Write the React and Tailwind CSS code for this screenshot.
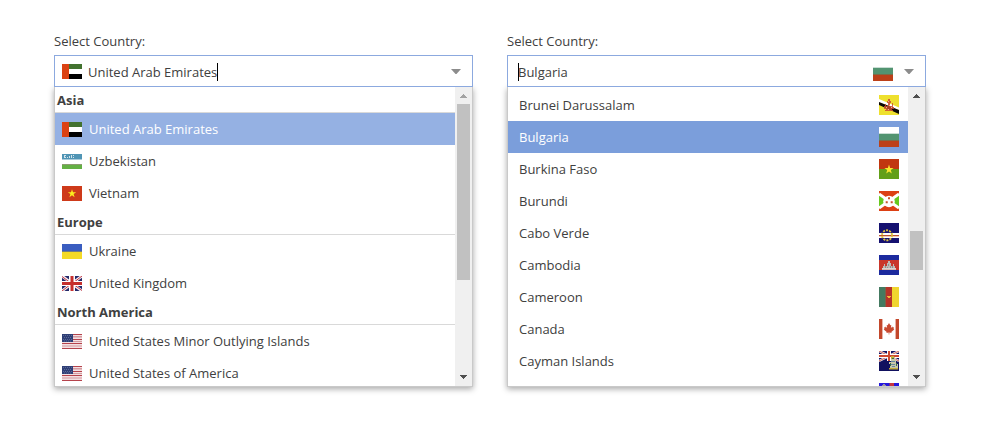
const FLAGS = {
  uae: (
    <>
      <path fill="#42722f" d="M7 0h13v5H7z" />
      <path fill="#fff" d="M7 5h13v5H7z" />
      <path fill="#000" d="M7 10h13v5H7z" />
      <path fill="#db4213" d="M0 0h7v15H0z" />
    </>
  ),
  uzbekistan: (
    <>
      <path fill="#fff" d="M0 0h20v15H0z" />
      <path fill="#5095b5" d="M0 0h20v5H0z" />
      <path fill="#a9cbdb" d="M0 5h20v1H0z" />
      <path fill="#64b044" d="M0 11h20v4H0z" />
      <path fill="#8c9b71" d="M0 10h20v1H0z" />
      <path fill="#fff" opacity=".75" d="M2 1h2v1H3v1h1v1H2zM5 3h1v1H5zM7 2h1v2H7zM9 1h1v3H9zM11 1h1v1h-1zM11 3h1v1h-1z" />
    </>
  ),
  vietnam: (
    <>
      <path fill="#ce3a1a" d="M0 0h20v15H0z" />
      <path fill="#fcee1f" d="M10 3.2l1 3h3.2l-2.6 1.9 1 3.1L10 9.3l-2.6 1.9 1-3.1-2.6-1.9H9z" />
    </>
  ),
  ukraine: (
    <>
      <path fill="#3a5dc0" d="M0 0h20v7H0z" />
      <path fill="#777f7c" d="M0 7h20v1H0z" />
      <path fill="#f4da27" d="M0 8h20v7H0z" />
    </>
  ),
  uk: (
    <>
      <path fill="#24296a" d="M0 0h20v15H0z" />
      <path stroke="#f4eef3" strokeWidth="2.8" d="M0 0l20 15M20 0L0 15" />
      <path stroke="#c33b45" strokeWidth="1" d="M0 .5l9 6.7M20 0l-9 7M0 15l9-7M20 14.5L11 8" />
      <path fill="#fff" d="M7 0h6v15H7zM0 5h20v5H0z" />
      <path fill="#c62f2d" d="M8.5 0h3v15h-3zM0 6h20v3H0z" />
    </>
  ),
  usa: (
    <>
      <path fill="#f3dfe1" d="M0 0h20v15H0z" />
      <path fill="#b5434c" d="M0 0h20v1H0zM0 5h20v1H0zM0 9h20v1H0zM0 14h20v1H0z" />
      <path fill="#d59aa0" d="M0 2h20v1.400H0zM0 7h20v1H0zM0 11.500h20v1H0z" />
      <path fill="#2f3f76" d="M0 0h11v8H0z" />
      <path stroke="#66749f" strokeWidth=".8" strokeDasharray="1 1" d="M1 1.500h9M2 3.500h8M1 5.500h9M2 7h8" />
    </>
  ),
  brunei: (
    <>
      <path fill="#eee02e" d="M0 0h20v20H0z" />
      <path fill="#fff" d="M0 4l20 8.500V15L0 7.500z" />
      <path fill="#0a0706" d="M0 7l20 8v4L0 10z" />
      <path fill="#ca4b30" d="M9 4h2v2h1v2h-1v3h2V8h1v4h1v2h-2v1h1v1H6v-1h1v-1H5v-3h1V9h1v2h2V8H8V6h1z" opacity=".85" />
      <path fill="#f0b48b" d="M9 6h1v1H9zM7 12h1v1H7zM12 12h1v1h-1zM10 10h1v1h-1zM9 14h1v1H9z" />
    </>
  ),
  bulgaria: (
    <>
      <path fill="#fff" d="M0 0h20v6H0z" />
      <path fill="#c9ddd4" d="M0 6h20v1H0z" />
      <path fill="#529471" d="M0 7h20v6H0z" />
      <path fill="#7c6c47" d="M0 13h20v1H0z" />
      <path fill="#bc4019" d="M0 14h20v6H0z" />
    </>
  ),
  burkina: (
    <>
      <path fill="#c13610" d="M0 0h20v10H0z" />
      <path fill="#629f18" d="M0 10h20v10H0z" />
      <path fill="#fae62f" d="M10 5.500l1.100 3.400h3.500l-2.800 2.100 1 3.400-2.800-2-2.800 2 1-3.400-2.800-2.100h3.500z" />
    </>
  ),
  burundi: (
    <>
      <path fill="#dc4014" d="M0 0h20v20H0z" />
      <path fill="#68c91e" d="M0 4l8 6-8 6zM20 4l-8 6 8 6z" />
      <path stroke="#fff" strokeWidth="3" d="M0 3l20 14M20 3L0 17" />
      <circle cx="10" cy="10.5" r="5.8" fill="#fff" />
      <path fill="#d94b25" d="M9 6.200h2v2H9zM6.700 10.300h2v2h-2zM11.700 10.300h2v2h-2z" />
      <path fill="#668d4c" d="M9.700 6.900h.7v.7h-.7zM7.400 11h.7v.7h-.7zM12.400 11h.7v.7h-.7z" />
    </>
  ),
  caboVerde: (
    <>
      <path fill="#151170" d="M0 0h20v20H0z" />
      <path fill="#fff" d="M0 10h20v5H0z" />
      <path fill="#be562c" d="M0 12h20v1.300H0z" />
      <circle cx="8" cy="12.3" r="5" fill="none" stroke="#ddc33d" strokeWidth="1.9" strokeDasharray="2 1.14" />
    </>
  ),
  cambodia: (
    <>
      <path fill="#1c2a9e" d="M0 0h20v20H0z" />
      <path fill="#c9362b" d="M0 5h20v10H0z" />
      <path fill="#bdb9b7" d="M3 14.500V13h1v-2h1V9h1v2h2V8h1V6h2v2h1v3h2V9h1v2h1v2h1v1.500z" />
      <path fill="#958d8c" d="M6 11h1v2H6zM9 9h1v2H9zM13 11h1v2h-1zM8 12h1v1H8zM11 11h1v2h-1z" />
      <path fill="#eee" d="M3 13.500h14v1H3z" />
    </>
  ),
  cameroon: (
    <>
      <path fill="#447a61" d="M0 0h7v20H0z" />
      <path fill="#b73329" d="M7 0h6v20H7z" />
      <path fill="#796349" d="M6 0h1v20H6z" />
      <path fill="#f0d52f" d="M13 0h7v20h-7z" />
      <path fill="#f1b93b" d="M8 9h4v1h-1v1H9v-1H8z" />
    </>
  ),
  canada: (
    <>
      <path fill="#fff" d="M0 0h20v20H0z" />
      <path fill="#c3472b" d="M0 0h3.400v20H0zM16.600 0H20v20h-3.400z" />
      <path fill="#c84a31" d="M10 4l1.300 2.300 1-.4-.4 3 1.500-1.400.4.900 1.200-.1-.4 1.600.7.500-3 2.500.3 1-2.300-.4v2h-.6v-2l-2.300.4.300-1-3-2.500.7-.5-.4-1.600 1.200.1.400-.9 1.500 1.400-.4-3 1 .4z" />
    </>
  ),
  cayman: (
    <>
      <path fill="#11115f" d="M0 0h20v20H0z" />
      <path stroke="#eee8ed" strokeWidth="2.4" d="M0 0l20 10M20 0L0 10" />
      <path stroke="#c85345" strokeWidth=".9" d="M0 0l20 10M20 0L0 10" />
      <path fill="#fff" d="M8 0h4v10H8zM0 3h20v4H0z" />
      <path fill="#ce4930" d="M9 0h2v10H9zM0 4h20v2H0z" />
      <path fill="#c9c7a8" d="M12 6h4v2h1v5h2v5h-8v-5h-1v-2h2z" />
      <path fill="#6787a0" d="M12 10h4v1h-4zM12 13h4v1h-4zM13 15h3v1h-3z" />
      <path fill="#c3ac3a" d="M12 5h3v3h-3zM10 17h9v1.500h-9z" />
      <path fill="#386b48" d="M13 7h2v1h-2zM11 12h1v3h-1zM17 12h1v3h-1z" />
    </>
  ),
  centralAfrica: (
    <>
      <path fill="#2417dd" d="M0 0h20v20H0z" />
      <path fill="#c6353f" d="M10.500 0H15v20h-4.500z" />
      <path fill="#9a91a8" d="M4 1h2v1h1v1H3V2h1z" />
    </>
  ),
};

const WIDE = ['uae', 'uzbekistan', 'vietnam', 'ukraine', 'uk', 'usa'];

const GROUPS = [
  { region: 'Asia', countries: [['United Arab Emirates', 'uae'], ['Uzbekistan', 'uzbekistan'], ['Vietnam', 'vietnam']] },
  { region: 'Europe', countries: [['Ukraine', 'ukraine'], ['United Kingdom', 'uk']] },
  { region: 'North America', countries: [['United States Minor Outlying Islands', 'usa'], ['United States of America', 'usa']] },
];

const COUNTRIES = [
  ['Brunei Darussalam', 'brunei'],
  ['Bulgaria', 'bulgaria'],
  ['Burkina Faso', 'burkina'],
  ['Burundi', 'burundi'],
  ['Cabo Verde', 'caboVerde'],
  ['Cambodia', 'cambodia'],
  ['Cameroon', 'cameroon'],
  ['Canada', 'canada'],
  ['Cayman Islands', 'cayman'],
  ['', 'centralAfrica'],
];

function Flag({ name }) {
  const wide = WIDE.includes(name);
  return (
    <svg
      className={wide ? 'mt-px h-[15px] w-5 shrink-0' : 'size-5 shrink-0'}
      viewBox={wide ? '0 0 20 15' : '0 0 20 20'}
      fill="none"
    >
      {FLAGS[name]}
    </svg>
  );
}

function Caret() {
  return (
    <svg className="mt-px h-[5px] w-[10px] shrink-0" viewBox="0 0 10 5">
      <path fill="#8c8c8c" d="M0 0h10L5.500 5h-1z" />
    </svg>
  );
}

function ScrollBar({ upClass, thumbClass }) {
  return (
    <div className="flex w-[17px] shrink-0 flex-col items-center bg-[#f0f0f0]">
      <div className="flex h-[17px] shrink-0 items-center pt-[1px]">
        <svg className={'h-1 w-[7px] ' + upClass} viewBox="0 0 7 4" shapeRendering="crispEdges">
          <path fill="currentColor" d="M3 0h1v1h1v1h1v1h1v1H0V3h1V2h1V1h1z" />
        </svg>
      </div>
      <div className={'w-[13px] shrink-0 bg-[#c1c1c1] ' + thumbClass} />
      <div className="mt-auto flex h-[17px] shrink-0 items-center pb-[1px]">
        <svg className="h-1 w-[7px] text-[#505050]" viewBox="0 0 7 4" shapeRendering="crispEdges">
          <path fill="currentColor" d="M0 0h7v1H6v1H5v1H4v1H3V3H2V2H1V1H0z" />
        </svg>
      </div>
    </div>
  );
}

function Picker({ field, children, scrollBar }) {
  return (
    <div className="w-[419px]">
      <div className="h-[23px]">Select Country:</div>
      <div className="relative z-10 flex h-8 items-center border border-[#8ca9df] bg-white">{field}</div>
      <div className="flex h-[300px] overflow-hidden border border-t-0 border-[#c9c9c9] bg-white shadow-[0_2px_6px_rgba(0,0,0,0.35)]">
        <div className="min-w-0 flex-1 overflow-hidden">{children}</div>
        {scrollBar}
      </div>
    </div>
  );
}

export default function App() {
  return (
    <div className="flex h-[428px] w-[992px] gap-[34px] overflow-hidden bg-white pt-8 pl-[54px] font-['Open_Sans',sans-serif] text-[13px] leading-[18px] text-[#404040]">
      <Picker
        field={
          <div className="flex flex-1 items-center pr-[11px] pl-[7px]">
            <Flag name="uae" />
            <span className="mt-[2px] ml-1.5">United Arab Emirates</span>
            <span className="mt-[2px] h-[18px] w-px bg-black" />
            <span className="ml-auto flex"><Caret /></span>
          </div>
        }
        scrollBar={<ScrollBar upClass="text-[#a3a3a3]" thumbClass="h-[176px]" />}
      >
        {GROUPS.map(({ region, countries }) => (
          <div key={region}>
            <div className="h-[26px] border-b border-[#d9d9d9] pl-[2px] leading-[26px] font-bold">{region}</div>
            {countries.map(([label, flag]) => (
              <div
                key={label}
                className={'flex h-8 items-center gap-[7px] pl-[7px] ' + (flag === 'uae' ? 'bg-[#95b1e3] text-white' : '')}
              >
                <Flag name={flag} />
                <span>{label}</span>
              </div>
            ))}
          </div>
        ))}
      </Picker>
      <Picker
        field={
          <div className="flex flex-1 items-center pr-[11px] pl-[10px]">
            <span className="mt-[2px] h-[18px] w-px bg-black" />
            <span className="mt-[2px] -ml-px">Bulgaria</span>
            <span className="ml-auto flex items-center gap-[11px]">
              <Flag name="bulgaria" />
              <Caret />
            </span>
          </div>
        }
        scrollBar={<ScrollBar upClass="text-[#505050]" thumbClass="mt-[127px] h-[39px]" />}
      >
        <div className="pt-[2px]">
          {COUNTRIES.map(([label, flag]) => (
            <div
              key={flag}
              className={'flex h-8 items-center justify-between pr-[9px] pl-[11px] ' + (flag === 'bulgaria' ? 'bg-[#7b9edb] text-white' : '')}
            >
              <span>{label}</span>
              <Flag name={flag} />
            </div>
          ))}
        </div>
      </Picker>
    </div>
  );
}
